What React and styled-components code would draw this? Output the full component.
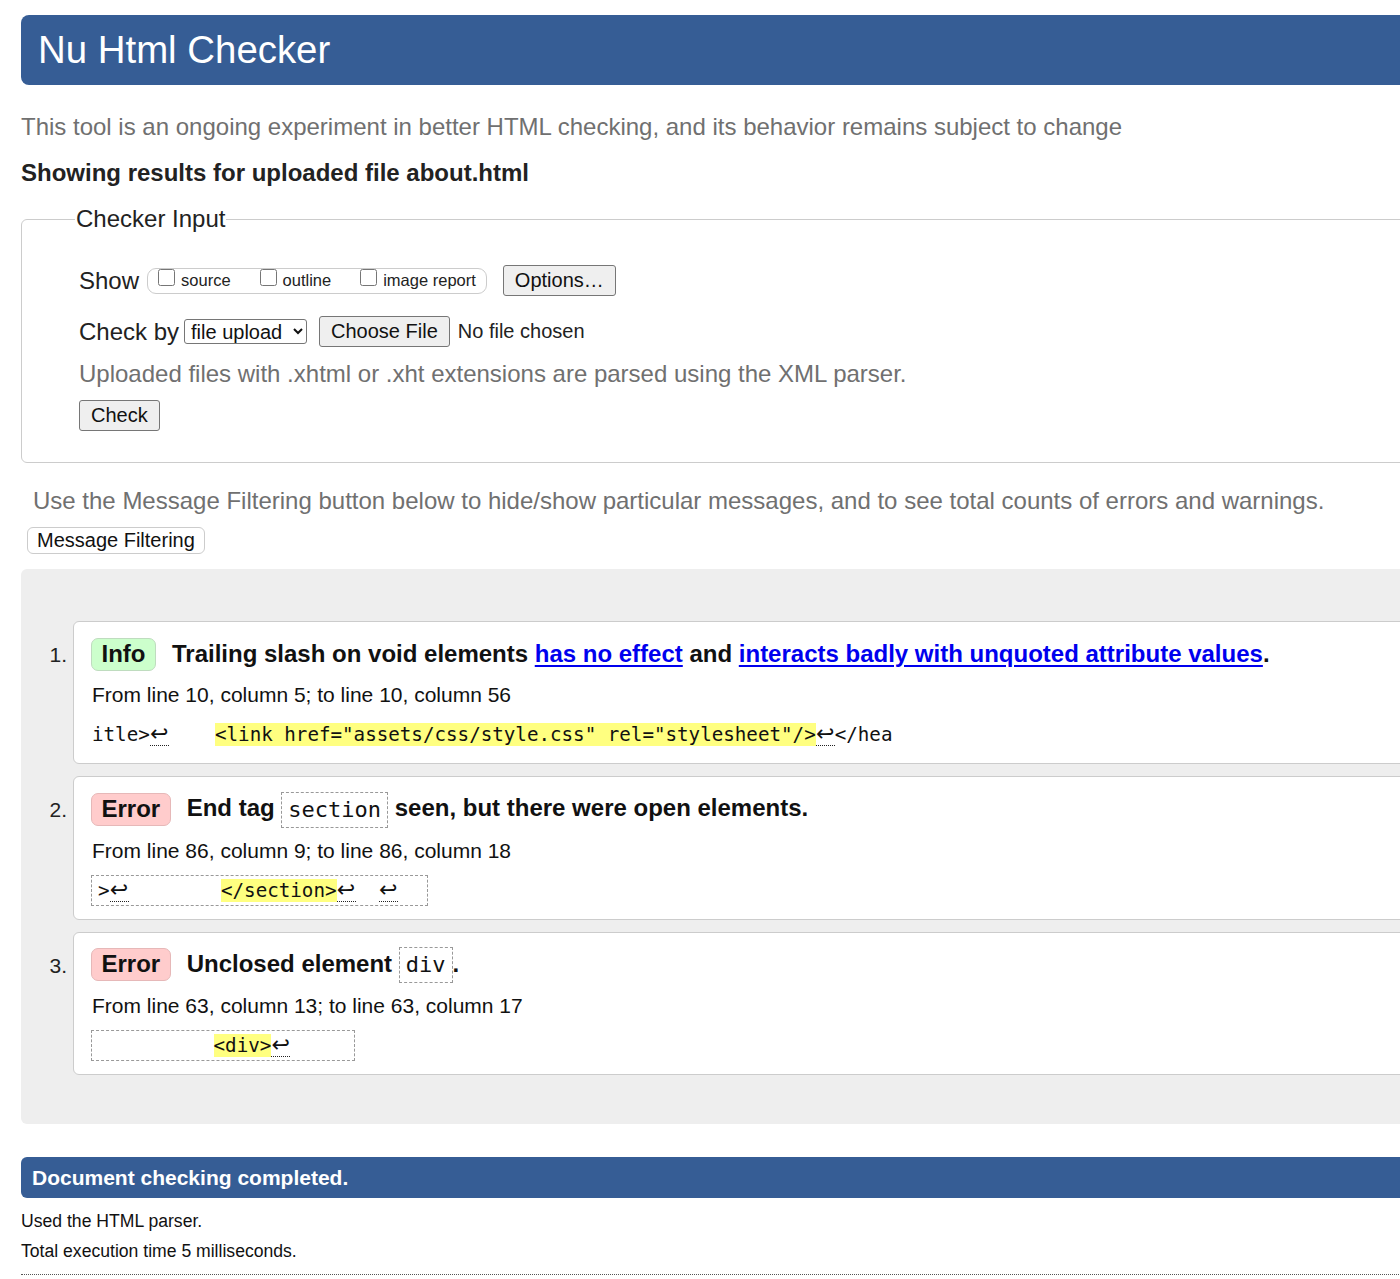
import React from 'react';
import styled, { createGlobalStyle } from 'styled-components';

const GlobalStyle = createGlobalStyle`
  html, body {
    margin: 0;
    padding: 0;
    overflow: hidden;
    background: #fff;
  }
  body {
    font-family: "Liberation Sans", Arial, sans-serif;
    color: #111;
  }
`;

const SANS = `"Liberation Sans", Arial, sans-serif`;
const MONO = `"DejaVu Sans Mono", "Liberation Mono", monospace`;
const BLUE = '#365d95';

const Page = styled.div`
  width: 1480px;
  padding: 15px 0 40px 21px;
  font-family: ${SANS};
`;

const Header = styled.header`
  height: 70px;
  background: ${BLUE};
  border-radius: 8px;
  display: flex;
  align-items: center;
  padding-left: 17px;
`;

const Title = styled.h1`
  margin: 0;
  font-size: 38.4px;
  font-weight: normal;
  color: #fff;
  line-height: 1;
`;

const Lead = styled.p`
  margin: ${p => p.$top || 0}px 0 0 ${p => p.$indent || 0}px;
  font-size: 24px;
  line-height: 30px;
  color: #707070;
`;

const Heading = styled.h2`
  margin: 16px 0 0;
  font-size: 24px;
  line-height: 30px;
  font-weight: bold;
  color: #222;
`;

const Fieldset = styled.fieldset`
  margin: 16px 0 0;
  padding: 31px 20px 31px 57px;
  border: 1px solid #ccc;
  border-radius: 6px;
`;

const Legend = styled.legend`
  padding: 0 1px;
  margin-left: -4px;
  font-size: 24px;
  line-height: 30px;
  color: #222;
`;

const FormRow = styled.div`
  display: flex;
  align-items: center;
  height: 31px;
  margin-top: ${p => p.$top || 0}px;
`;

const Label = styled.span`
  font-size: 24px;
  color: #222;
  margin-right: ${p => p.$gap || 0}px;
`;

const CheckGroup = styled.div`
  display: flex;
  align-items: center;
  height: 24px;
  padding: 0 10px 0 10px;
  border: 1px solid #ccc;
  border-radius: 9px;
  margin-right: 16px;
`;

const CheckLabel = styled.label`
  display: flex;
  align-items: center;
  gap: 6px;
  font-size: 16.5px;
  color: #222;
  margin-right: ${p => (p.$last ? 0 : 29)}px;
`;

const CheckBox = styled.input.attrs({ type: 'checkbox' })`
  width: 17px;
  height: 17px;
  margin: 0 0 6px;
`;

const NativeButton = styled.button`
  height: 31px;
  padding: 0 11px;
  font-family: ${SANS};
  font-size: 20px;
  color: #111;
  background: #efefef;
  border: 1px solid #767676;
  border-radius: 3px;
  margin-right: ${p => p.$gap || 0}px;
`;

const Select = styled.select`
  width: 123px;
  height: 25px;
  padding: 0 2px;
  font-family: ${SANS};
  font-size: 20px;
  color: #111;
  background: #fff;
  border: 1px solid #767676;
  border-radius: 3px;
  margin-right: 12px;
`;

const NoFile = styled.span`
  font-size: 20px;
  color: #222;
`;

const FilterButton = styled.button`
  margin: 11px 0 0 6px;
  height: 27px;
  padding: 0 9px;
  font-family: ${SANS};
  font-size: 20px;
  color: #111;
  background: #fff;
  border: 1px solid #ccc;
  border-radius: 6px;
`;

const Results = styled.div`
  margin-top: 15px;
  padding: 52px 0 49px;
  background: #eee;
  border-radius: 6px;
`;

const Item = styled.div`
  display: flex;
  & + & {
    margin-top: 12px;
  }
`;

const Num = styled.div`
  width: 46px;
  padding: 17px 6px 0 0;
  text-align: right;
  font-size: 21px;
  line-height: 34px;
  color: #222;
`;

const Card = styled.div`
  flex: 1;
  background: #fff;
  border: 1px solid #ccc;
  border-radius: 6px;
  padding: 14px 17px 13px 17px;
`;

const MsgLine = styled.div`
  display: flex;
  align-items: center;
  min-height: 36px;
  font-size: 24px;
  font-weight: bold;
  line-height: 34px;
`;

const Badge = styled.span`
  display: inline-block;
  height: 31px;
  line-height: 30px;
  padding: 0 9.5px;
  margin-right: 16px;
  border: 1px solid ${p => (p.$kind === 'info' ? '#bfdcbf' : '#e6b8b8')};
  border-radius: 7px;
  background: ${p => (p.$kind === 'info' ? '#ccffcc' : '#ffcccc')};
`;

const Link = styled.a`
  color: #0000ee;
  text-decoration: underline;
  text-underline-offset: 3px;
`;

const Code = styled.code`
  display: inline-block;
  vertical-align: middle;
  font-family: ${MONO};
  font-size: 22px;
  font-weight: normal;
  line-height: 34px;
  padding: 0 6px;
  border: 1px dashed #999;
`;

const Location = styled.p`
  margin: 9px 0 0 1px;
  font-size: 21px;
  line-height: 28px;
  color: #111;
`;

const Extract = styled.div`
  width: fit-content;
  margin-top: 10px;
  font-family: ${MONO};
  font-size: 19.2px;
  line-height: 29px;
  white-space: pre;
  border: ${p => (p.$plain ? 'none' : '1px dashed #999')};
  padding: ${p => (p.$plain ? '1px 0 1px 1px' : '0 6px')};
`;

const Mark = styled.mark`
  background: #ffff80;
  color: #111;
`;

const NL = styled.span`
  display: inline-block;
  width: 19px;
  line-height: 22px;
  font-family: "DejaVu Sans", sans-serif;
  font-size: 22px;
  text-align: center;
  border-bottom: 1px dotted #222;
`;

const DoneBar = styled.div`
  margin-top: 33px;
  height: 41px;
  line-height: 41px;
  padding-left: 11px;
  background: ${BLUE};
  border-radius: 6px;
  color: #fff;
  font-size: 21px;
  font-weight: bold;
`;

const Stat = styled.p`
  margin: ${p => p.$top}px 0 0;
  font-size: 17.6px;
  line-height: 24px;
  color: #111;
`;

const DottedRule = styled.hr`
  margin: 11px 0 0;
  border: none;
  border-top: 1px dotted #555;
`;

const nl = <NL>↩</NL>;

const messages = [
  {
    kind: 'info',
    label: 'Info',
    text: (
      <>
        Trailing slash on void elements <Link href="#">has no effect</Link> and{' '}
        <Link href="#">interacts badly with unquoted attribute values</Link>.
      </>
    ),
    location: 'From line 10, column 5; to line 10, column 56',
    plain: true,
    extract: (
      <>
        itle&gt;{nl}{'    '}
        <Mark>{'<link href="assets/css/style.css" rel="stylesheet"/>'}</Mark>
        {nl}&lt;/hea
      </>
    ),
  },
  {
    kind: 'error',
    label: 'Error',
    text: (
      <>
        End tag <Code>section</Code> seen, but there were open elements.
      </>
    ),
    location: 'From line 86, column 9; to line 86, column 18',
    extract: (
      <>
        &gt;{nl}{'        '}
        <Mark>{'</section>'}</Mark>
        {nl}{'  '}{nl}{'  '}
      </>
    ),
  },
  {
    kind: 'error',
    label: 'Error',
    text: (
      <>
        Unclosed element <Code>div</Code>.
      </>
    ),
    location: 'From line 63, column 13; to line 63, column 17',
    extract: (
      <>
        {'          '}
        <Mark>{'<div>'}</Mark>
        {nl}{'     '}
      </>
    ),
  },
];

export default function App() {
  return (
    <>
      <GlobalStyle />
      <Page>
        <Header>
          <Title>Nu Html Checker</Title>
        </Header>

        <Lead $top={27}>
          This tool is an ongoing experiment in better HTML checking, and its behavior remains subject to change
        </Lead>
        <Heading>Showing results for uploaded file about.html</Heading>

        <Fieldset>
          <Legend>Checker Input</Legend>
          <FormRow>
            <Label $gap={8}>Show</Label>
            <CheckGroup>
              <CheckLabel><CheckBox />source</CheckLabel>
              <CheckLabel><CheckBox />outline</CheckLabel>
              <CheckLabel $last><CheckBox />image report</CheckLabel>
            </CheckGroup>
            <NativeButton type="button">Options…</NativeButton>
          </FormRow>
          <FormRow $top={20}>
            <Label $gap={5}>Check by</Label>
            <Select defaultValue="file">
              <option value="address">address</option>
              <option value="file">file upload</option>
              <option value="text">text input</option>
            </Select>
            <NativeButton type="button" $gap={8}>Choose File</NativeButton>
            <NoFile>No file chosen</NoFile>
          </FormRow>
          <Lead $top={12}>Uploaded files with .xhtml or .xht extensions are parsed using the XML parser.</Lead>
          <FormRow $top={11}>
            <NativeButton type="button">Check</NativeButton>
          </FormRow>
        </Fieldset>

        <Lead $top={23} $indent={12}>
          Use the Message Filtering button below to hide/show particular messages, and to see total counts of errors and warnings.
        </Lead>
        <FilterButton type="button">Message Filtering</FilterButton>

        <Results>
          {messages.map((m, i) => (
            <Item key={i}>
              <Num>{i + 1}.</Num>
              <Card>
                <MsgLine>
                  <Badge $kind={m.kind}>{m.label}</Badge>
                  <span>{m.text}</span>
                </MsgLine>
                <Location>{m.location}</Location>
                <Extract $plain={m.plain}>{m.extract}</Extract>
              </Card>
            </Item>
          ))}
        </Results>

        <DoneBar>Document checking completed.</DoneBar>
        <Stat $top={11}>Used the HTML parser.</Stat>
        <Stat $top={6}>Total execution time 5 milliseconds.</Stat>
        <DottedRule />
      </Page>
    </>
  );
}
